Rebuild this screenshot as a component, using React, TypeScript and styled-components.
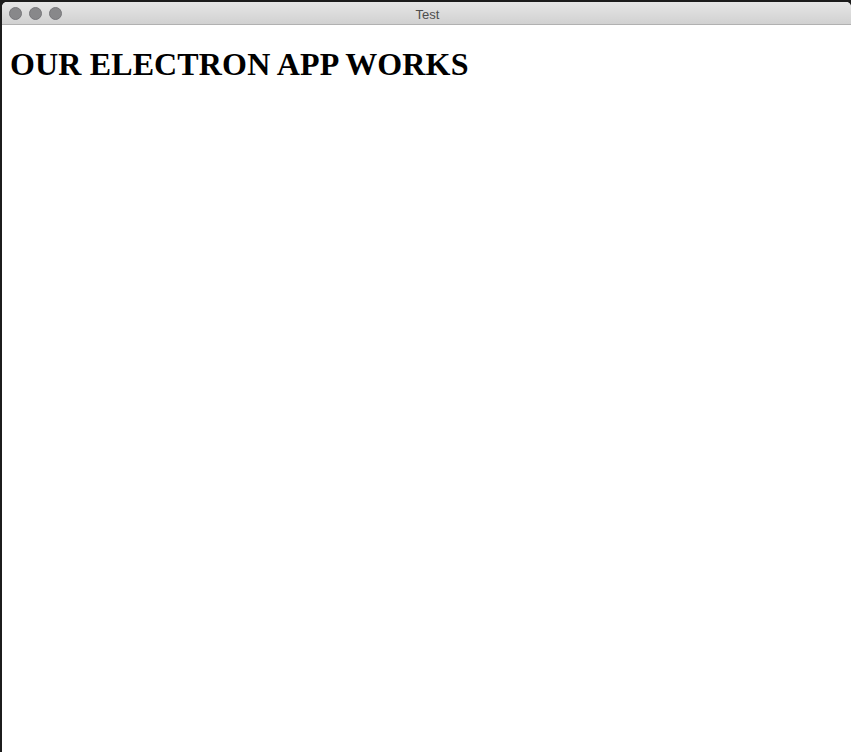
import React from "react";
import styled, { createGlobalStyle } from "styled-components";

const GlobalStyle = createGlobalStyle`
  html, body {
    margin: 0;
    padding: 0;
    height: 100%;
    background: #1c1c1c;
  }
  #root {
    height: 100%;
  }
`;

const Desktop = styled.div`
  height: 752px;
  padding: 2px 0 0 2px;
  box-sizing: border-box;
  overflow: hidden;
`;

const Window = styled.div`
  height: 100%;
  display: flex;
  flex-direction: column;
  background: #fff;
  border-radius: 5px 5px 0 0;
  overflow: hidden;
`;

const TitleBar = styled.div`
  position: relative;
  height: 22px;
  flex: none;
  display: flex;
  align-items: center;
  justify-content: center;
  background: linear-gradient(#e6e6e6, #d1d1d1);
  border-bottom: 1px solid #b1b1b1;
`;

const Lights = styled.div`
  position: absolute;
  left: 7px;
  top: 5px;
  display: flex;
  gap: 7px;
`;

const Light = styled.span`
  width: 13px;
  height: 13px;
  border-radius: 50%;
  background: #88888a;
  border: 1px solid #77777a;
  box-sizing: border-box;
`;

const Title = styled.span`
  font-family: "Liberation Sans", Arial, sans-serif;
  font-size: 13px;
  color: #4d4d4d;
  margin: 2px 0 0 2px;
`;

const Page = styled.div`
  flex: 1;
  padding: 0 8px;
  font-family: "Liberation Serif", "Times New Roman", serif;
`;

const Heading = styled.h1`
  margin: 21px 0;
  font-size: 32px;
  font-weight: bold;
  letter-spacing: 0.14px;
  color: #000;
`;

const App = () => {
  return (
    <>
      <GlobalStyle />
      <Desktop>
        <Window>
          <TitleBar>
            <Lights>
              <Light />
              <Light />
              <Light />
            </Lights>
            <Title>Test</Title>
          </TitleBar>
          <Page>
            <Heading>OUR ELECTRON APP WORKS</Heading>
          </Page>
        </Window>
      </Desktop>
    </>
  );
};

export default App;
